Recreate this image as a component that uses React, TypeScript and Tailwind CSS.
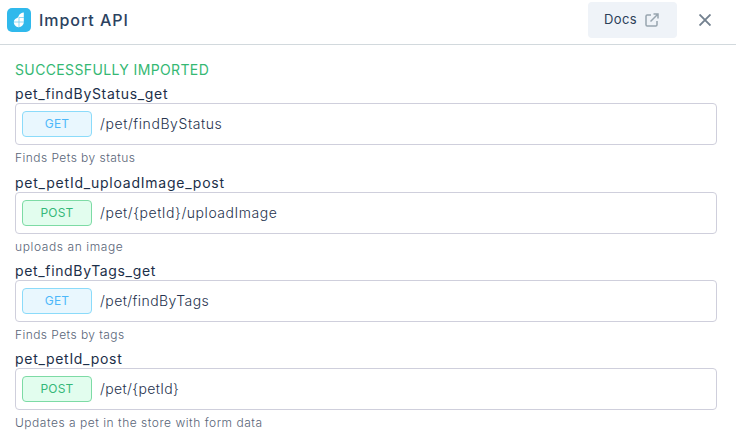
type Operation = {
  name: string;
  nameSpacing: string;
  method: 'GET' | 'POST';
  path: string;
  pathSpacing: string;
  summary: string;
  summarySpacing: string;
};

const operations: Operation[] = [
  { name: 'pet_findByStatus_get', nameSpacing: 'tracking-[0.68px]', method: 'GET', path: '/pet/findByStatus', pathSpacing: 'tracking-[0.58px]', summary: 'Finds Pets by status', summarySpacing: 'tracking-[0.45px]' },
  { name: 'pet_petId_uploadImage_post', nameSpacing: 'tracking-[0.77px]', method: 'POST', path: '/pet/{petId}/uploadImage', pathSpacing: 'tracking-[0.54px]', summary: 'uploads an image', summarySpacing: 'tracking-[0.6px]' },
  { name: 'pet_findByTags_get', nameSpacing: 'tracking-[0.65px]', method: 'GET', path: '/pet/findByTags', pathSpacing: 'tracking-[0.42px]', summary: 'Finds Pets by tags', summarySpacing: 'tracking-[0.43px]' },
  { name: 'pet_petId_post', nameSpacing: 'tracking-[0.7px]', method: 'POST', path: '/pet/{petId}', pathSpacing: 'tracking-[0.35px]', summary: 'Updates a pet in the store with form data', summarySpacing: 'tracking-[0.52px]' },
];

const badgeStyles = {
  GET: 'border-[#8bdbfa] bg-[#e9f7fe] text-[#4db8fa]',
  POST: 'border-[#7ddba5] bg-[#e2fdee] text-[#35b878]',
};

function Logo() {
  return (
    <svg className="size-6" viewBox="0 0 24 24">
      <rect width="24" height="24" rx="5" fill="#30b9ec" />
      <path d="M16.800 4.400V14a5 5 0 1 1-9.800-1.200c.4-1.500 1.700-2.300 3-2.900 1.400-.6 1.400-1.400 2-2.700.8-1.600 2.500-2.500 4.800-2.800Z" fill="#fff" />
      <path d="M12 9v10M7 14h10M12 9.500h5" stroke="#76d1f3" strokeWidth=".8" />
    </svg>
  );
}

function Row({ op }: { op: Operation }) {
  return (
    <section className="h-[88.33px]">
      <h3 className={`h-[18px] whitespace-nowrap text-sm leading-[18px] font-normal text-[#1c2f49] ${op.nameSpacing}`}>{op.name}</h3>
      <div className="flex h-[42px] items-center gap-2 rounded border border-[#cfcfdc] px-1.5">
        <span className={`flex h-[26px] w-[70px] items-center justify-center rounded border text-xs font-normal tracking-[0.2px] ${badgeStyles[op.method]}`}>{op.method}</span>
        <span className={`whitespace-nowrap text-sm font-light text-[#26334e] ${op.pathSpacing}`}>{op.path}</span>
      </div>
      <p className={`mt-[5px] whitespace-nowrap text-xs leading-4 font-light text-[#596578] ${op.summarySpacing}`}>{op.summary}</p>
    </section>
  );
}

export default function App() {
  return (
    <div className="h-[448px] w-[736px] overflow-hidden bg-white font-['Inter',sans-serif]">
      <header className="flex h-[45px] items-start border-b border-[#d2d9dd] pl-[7px]">
        <div className="mt-2 flex h-6 items-center gap-2">
          <Logo />
          <h1 className="whitespace-nowrap text-base leading-6 font-medium tracking-[0.95px] text-[#2b4260]">Import API</h1>
        </div>
        <button className="mt-0.5 ml-auto flex h-9 w-[89px] items-center gap-2 rounded bg-[#eff3f8] pl-4 text-[13px] font-normal tracking-[0.4px] text-[#2b4058]">
          Docs
          <svg className="size-3.5" viewBox="0 0 14 14" fill="none" stroke="#98a5af" strokeWidth="1.5">
            <path d="M6 2H2.200Q1 2 1 3.200v8.600Q1 13 2.200 13h8.600Q12 13 12 11.800V8M8.500 1H13v4.500M13 1 5.500 8.500" />
          </svg>
        </button>
        <button className="mt-3.5 mr-[25px] ml-[22px] size-3">
          <svg className="size-3" viewBox="0 0 12 12" fill="none" stroke="#73818f" strokeWidth="1.9">
            <path d="m.5.5 11 11M11.500.5l-11 11" />
          </svg>
        </button>
      </header>
      <main className="pt-[15px] pr-[19px] pl-[15px]">
        <h2 className="h-[25.33px] whitespace-nowrap text-sm leading-[19px] tracking-[0.37px] text-[#35b873]">SUCCESSFULLY IMPORTED</h2>
        {operations.map((op) => (
          <Row key={op.name} op={op} />
        ))}
      </main>
    </div>
  );
}
